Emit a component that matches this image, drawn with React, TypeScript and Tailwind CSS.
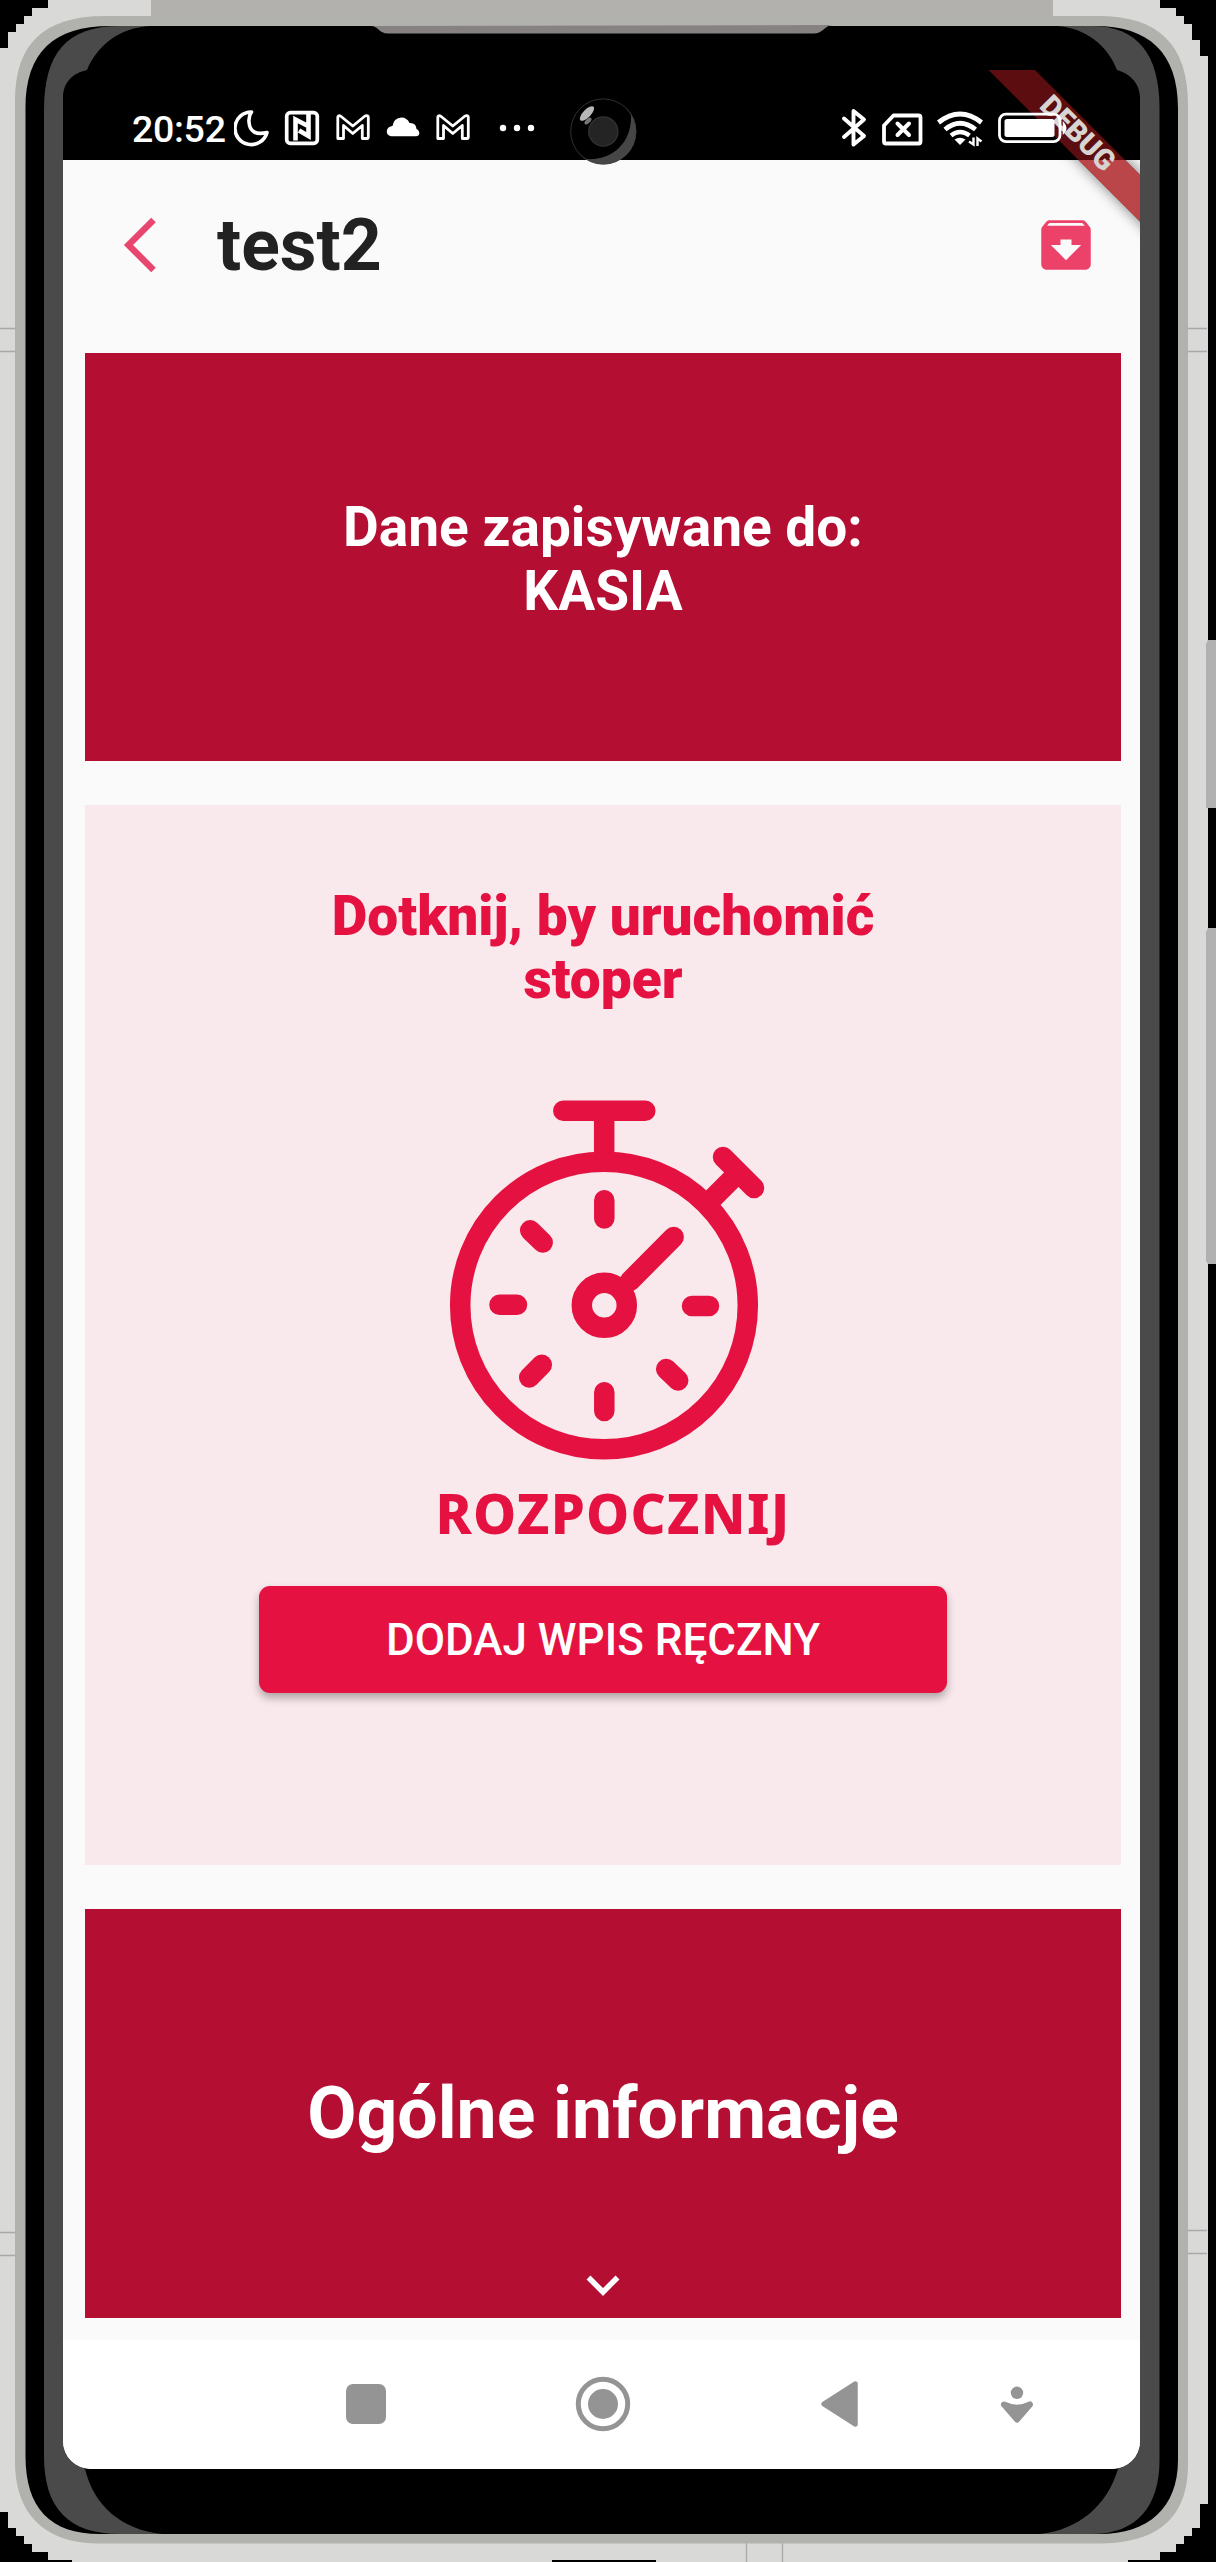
import { MdArchive } from 'react-icons/md';

function DeviceFrame() {
  return (
    <svg className="absolute inset-0" width="1216" height="2562" viewBox="0 0 1216 2562" aria-hidden="true">
      <rect width="1216" height="2562" fill="#000" />
      <path
        fill="#d9d9d8"
        d="M48 0H1160V8H1176V16H1184V24H1192V40H1200V56H1208V2504H1200V2528H1192V2536H1184V2544H1176V2552H1160V2560H1128V2562H72V2560H48V2552H32V2544H24V2536H16V2528H8V2512H0V48H8V32H16V24H24V16H32V8H48Z"
      />
      <rect x="552" y="2560" width="104" height="2" fill="#000" />
      <rect x="151" y="0" width="902" height="20" fill="#b3b1ad" />
      <g stroke="#a9a9a9" strokeWidth="1.3">
        <path d="M0 328.5H16M0 351.5H16M1188 328.5H1207M1188 351.5H1207M0 2232.5H16M0 2255.5H16M1188 2230.5H1207M1188 2253.5H1207M746.5 2543V2562M782.5 2543V2562" />
      </g>
      <path fill="#b1b1b1" d="M1206 644L1208 640H1216V755H1206ZM1206 932L1208 928H1216V1264H1208L1206 1261Z" />
      <path fill="#b1b1b1" d="M1206 750H1216V808H1206Z" />
      <path
        fill="#b1b1ae"
        d="M15 100C15 44 44 16 105 16H1098C1158 16 1188 44 1188 105V2464C1188 2518 1158 2543.5 1098 2543.5H98C45 2543.5 15 2514 15 2462Z"
      />
      <path
        fill="#000"
        d="M25.500 108C25.500 52 54 26 110 26H1092C1148 25 1178 52 1178 108V2460C1178 2508 1148 2534 1100 2534H100C50 2534 25.500 2508 25.500 2456Z"
      />
      <path
        fill="#4a4a4a"
        d="M44 110C44 54 66 26 120 26H1092C1137 26 1159.500 54 1159.500 108V2460C1159.500 2506 1137 2534 1092 2534H120C68 2534 44 2508 44 2456Z"
      />
      <path
        fill="#000"
        d="M63 98C63 82 73 73 87 70C98 44 120 28 150 26H1057C1086 28 1108 46 1117 70C1131 74 1140 84 1140 98V2440H1130L1118 2469C1107 2506 1078 2530 1040 2534H162C122 2530 94 2506 85 2469L63 2440Z"
      />
      <path fill="#858281" d="M371 26C378 26 379 33.500 388 33.500H814C823 33.500 824 26 832 25Z" />
    </svg>
  );
}

function Camera() {
  return (
    <svg className="absolute left-[570px] top-[98px]" width="67" height="67" viewBox="570 98 67 67" aria-hidden="true">
      <circle cx="603.3" cy="131.500" r="33" fill="#464646" />
      <path d="M631 115A33 33 0 1 0 586 159C613 161 632 142 631 115Z" fill="#000" />
      <circle cx="603.3" cy="131.500" r="32.600" fill="none" stroke="#444" strokeWidth="0.7" />
      <circle cx="603.300" cy="131.500" r="14.500" fill="#242424" stroke="#303030" strokeWidth="1.500" />
      <ellipse cx="587" cy="113.500" rx="9.500" ry="3.900" fill="#b9b9b9" transform="rotate(-46 587 113.500)" />
      <ellipse cx="588" cy="121" rx="4.300" ry="2.200" fill="#777" transform="rotate(-44 588 121)" />
    </svg>
  );
}

function DebugRibbon() {
  return (
    <div className="absolute left-[925px] top-0 h-[160px] w-[152px]">
      <svg className="absolute left-0 top-0" width="152" height="180" viewBox="988 70 152 180" aria-hidden="true">
        <defs>
          <filter id="ribbonBlur" x="-30%" y="-30%" width="160%" height="160%">
            <feGaussianBlur stdDeviation="7" />
          </filter>
          <clipPath id="lightArea">
            <rect x="988" y="160" width="152" height="100" />
          </clipPath>
        </defs>
        <g clipPath="url(#lightArea)">
          <path d="M988 69H1035L1170 204V252Z" fill="#000" opacity="0.5" filter="url(#ribbonBlur)" />
        </g>
        <path d="M988 69.500H1034.500L1140 175V221.500Z" fill="#5c0d0f" />
        <path d="M1078.500 160H1125L1140 175V221.500Z" fill="#bb4649" />
      </svg>
      <span className="absolute left-[39px] top-[47px] w-[102px] rotate-45 text-center font-['Roboto'] text-[29px] leading-[32px] font-black text-[#d8d4d2]">
        DEBUG
      </span>
    </div>
  );
}

function GmailIcon() {
  return (
    <svg width="34" height="40" viewBox="336.500 108 34 40" fill="none" stroke="#fff" strokeWidth="2.800" strokeLinejoin="round">
      <path d="M338.300 138.500V117.500Q338.300 115 341 116L353.300 126L365.500 116Q368.800 115 368.800 117.500V137Q368.800 138.500 367.500 138.500H362.800V125.500L353.300 133.500L344 125.500V138.500Z" />
    </svg>
  );
}

function StatusBar() {
  return (
    <div className="relative flex h-[90px] shrink-0 items-center bg-transparent pt-[26px] pl-[69px] text-white">
      <DebugRibbon />
      <span className="w-[102px] shrink-0 pt-[2px] font-['Roboto'] text-[37.500px] leading-[40px] font-medium tracking-[-0.3px]">20:52</span>
      <svg width="36" height="40" viewBox="233 108 36 40" fill="none" stroke="#fff" strokeWidth="3.600" strokeLinejoin="round">
        <path d="M250.500 112A16.300 16.300 0 1 0 266 132.500Q249 136.500 248 122Q247.500 116 250.500 112Z" />
      </svg>
      <svg className="ml-[14px]" width="36" height="40" viewBox="284 108 36 40" fill="none" stroke="#fff">
        <rect x="286.700" y="112.700" width="30.600" height="30.600" rx="3.500" strokeWidth="3.700" />
        <path d="M295.500 140.500V119.500L307 125.500M308.500 114V136L299 130.500" strokeWidth="4.600" />
      </svg>
      <div className="ml-[16px]"><GmailIcon /></div>
      <svg className="ml-[16px]" width="34" height="40" viewBox="386 108 34 40" fill="#fff">
        <path d="M391 136.200Q386.500 135.500 386.800 131Q387.500 126.500 392.500 126Q393.500 118 401.500 117.500Q407 117.500 409.500 123Q416 122.500 416.500 129Q419.500 130.500 419.300 133.500Q419 136.200 416 136.200Z" />
      </svg>
      <div className="ml-[16px]"><GmailIcon /></div>
      <svg className="ml-[29px]" width="36" height="40" viewBox="499 108 36 40" fill="#fff">
        <circle cx="503" cy="128" r="3.200" />
        <circle cx="517" cy="128" r="3.200" />
        <circle cx="531" cy="128" r="3.200" />
      </svg>
      <svg className="relative ml-[306px]" width="27" height="40" viewBox="841 108 27 40" fill="none" stroke="#fff" strokeWidth="3.900" strokeLinejoin="round" strokeLinecap="round">
        <path d="M844 118.500L864 136L853.500 144.500V111L864 119.500L844 137" />
      </svg>
      <svg className="relative ml-[13px]" width="42" height="40" viewBox="881 108 42 40" fill="none" stroke="#fff" strokeLinejoin="round">
        <path d="M893.500 115.500H918.500Q920.500 115.500 920.500 117.500V141.500Q920.500 143.500 918.500 143.500H886Q884 143.500 884 141.500V125.500Z" strokeWidth="3.800" />
        <path d="M897.500 123.500L909 135M909 123.500L897.500 135" strokeWidth="4" strokeLinecap="round" />
      </svg>
      <svg className="relative ml-[13px]" width="48" height="40" viewBox="936 108 48 40" fill="none" stroke="#fff">
        <path d="M938.500 122.500Q960 105.500 981.500 122.500" strokeWidth="4.800" />
        <path d="M945 129.500Q960 117 975.500 129.500" strokeWidth="4.800" />
        <path d="M951 135.500Q960 128.500 969.500 135.500" strokeWidth="4.500" />
        <path d="M954.500 139.500Q960 136 965.500 139.500L960 145Z" fill="#fff" stroke="none" />
        <path d="M969 141.500L973.500 144.500V137.500M977.500 146V138.500L981.500 141.500" strokeWidth="2.400" />
      </svg>
      <svg className="relative ml-[13px]" width="71" height="40" viewBox="997 108 71 40">
        <rect x="999.500" y="114.200" width="60.500" height="27.500" rx="6.500" fill="none" stroke="#fff" strokeWidth="2.800" />
        <rect x="1004.500" y="119" width="50" height="18" rx="2.500" fill="#fff" />
        <path d="M1063.500 123Q1068 128 1063.500 133Z" fill="#fff" stroke="#fff" strokeWidth="1.500" />
      </svg>
    </div>
  );
}

function AppHeader() {
  return (
    <header className="flex h-[193px] shrink-0 items-center pr-[41px] pb-[23px] pl-[57px]">
      <svg width="40" height="66" viewBox="120 212 40 66" fill="none" stroke="#e8466f" strokeWidth="6.500">
        <path d="M153.500 220L128.500 245L153.500 270" />
      </svg>
      <h1 className="ml-[57px] pt-[2px] font-['Roboto'] text-[71.500px] leading-[84px] font-bold text-[#222]">test2</h1>
      <MdArchive className="ml-auto h-[66px] w-[66px] text-[#ec4269]" />
    </header>
  );
}

function Stopwatch() {
  return (
    <svg className="ml-[4px]" width="326" height="362" viewBox="442 1099 326 362" fill="none" stroke="#e51241" strokeWidth="20.500" strokeLinecap="round" aria-hidden="true">
      <circle cx="604" cy="1305.500" r="143.800" />
      <path d="M563.300 1110.700H645.300M604.200 1112V1160" />
      <path d="M723 1157L754 1188M738 1173L712 1199" />
      <circle cx="604.300" cy="1305.300" r="22.500" />
      <path d="M630 1281L673.700 1237" />
      <path d="M604.300 1200.200V1218.500M604.300 1392.300V1411M499.500 1304.800H517M692 1306H709M530.200 1230.300L542.700 1242.500M529.200 1377.500L541.800 1364.800M666.200 1369L678.200 1380.500" />
    </svg>
  );
}

function NavigationBar() {
  return (
    <nav className="flex h-[129px] shrink-0 items-center bg-white pb-[2px] pl-[283px]">
      <span className="h-[40px] w-[40px] rounded-[7px] bg-[#949494]" />
      <svg className="ml-[189px]" width="56" height="56" viewBox="0 0 56 56">
        <circle cx="28" cy="28" r="24.700" fill="none" stroke="#949494" strokeWidth="5" />
        <circle cx="28" cy="28" r="15" fill="#949494" />
      </svg>
      <svg className="ml-[188px]" width="40" height="48" viewBox="819 2380 40 48">
        <path d="M823.500 2404L855.500 2383.500V2424.500Z" fill="#949494" stroke="#949494" strokeWidth="4.500" strokeLinejoin="round" />
      </svg>
      <svg className="ml-[141px]" width="34" height="48" viewBox="1000 2380 34 48" fill="#949494">
        <circle cx="1017" cy="2392.800" r="6.200" />
        <path d="M1004 2404.500Q1017 2411 1030 2404.500L1017 2419.500Z" stroke="#949494" strokeWidth="6" strokeLinejoin="round" />
      </svg>
    </nav>
  );
}

export default function App() {
  return (
    <div className="relative h-[2562px] w-[1216px] overflow-hidden bg-black pt-[70px] pl-[63px] font-['Roboto',sans-serif]">
      <DeviceFrame />
      <div className="relative flex h-[2399px] w-[1077px] flex-col overflow-hidden rounded-b-[28px]">
        <div className="absolute inset-x-0 top-[90px] bottom-0 bg-[#fafafa]" />
        <StatusBar />
        <div className="relative -z-0 flex min-h-0 flex-1 flex-col">
          <AppHeader />
          <main className="flex flex-1 flex-col gap-[44px] pr-[19px] pl-[22px]">
            <section className="flex h-[408px] items-center justify-center bg-[#b50e33]">
              <p className="pt-[4px] text-center text-[55px] leading-[64px] font-bold text-white">
                Dane zapisywane do:
                <br />
                KASIA
              </p>
            </section>
            <section className="flex h-[1060px] flex-col items-center bg-[#fae9ec] pt-[80px]">
              <p className="text-center text-[55px] leading-[63px] font-black text-[#e51241]">
                Dotknij, by uruchomić
                <br />
                stoper
              </p>
              <button className="mt-[88px] flex flex-col items-center">
                <Stopwatch />
                <span className="mt-[14px] ml-[20px] font-['Noto_Sans'] text-[54.500px] leading-[76px] font-extrabold tracking-[1.3px] whitespace-nowrap text-[#e51241]">
                  ROZPOCZNIJ
                </span>
              </button>
              <button className="mt-[35px] flex h-[107px] w-[688px] items-center justify-center rounded-[11px] bg-[#e51241] text-[44px] leading-[52px] font-medium text-white shadow-[0_5px_8px_rgba(0,0,0,0.3)]">
                DODAJ WPIS RĘCZNY
              </button>
            </section>
            <section className="flex h-[409px] flex-col items-center bg-[#b50e33] pt-[162px]">
              <h2 className="text-[71.500px] leading-[86px] font-bold text-white">Ogólne informacje</h2>
              <svg className="mt-[113px]" width="40" height="32" viewBox="583 2270 40 32" fill="none" stroke="#fff" strokeWidth="5.500">
                <path d="M588.500 2277.500L603 2292L617.500 2277.500" />
              </svg>
            </section>
          </main>
          <NavigationBar />
        </div>
      </div>
      <Camera />
    </div>
  );
}
